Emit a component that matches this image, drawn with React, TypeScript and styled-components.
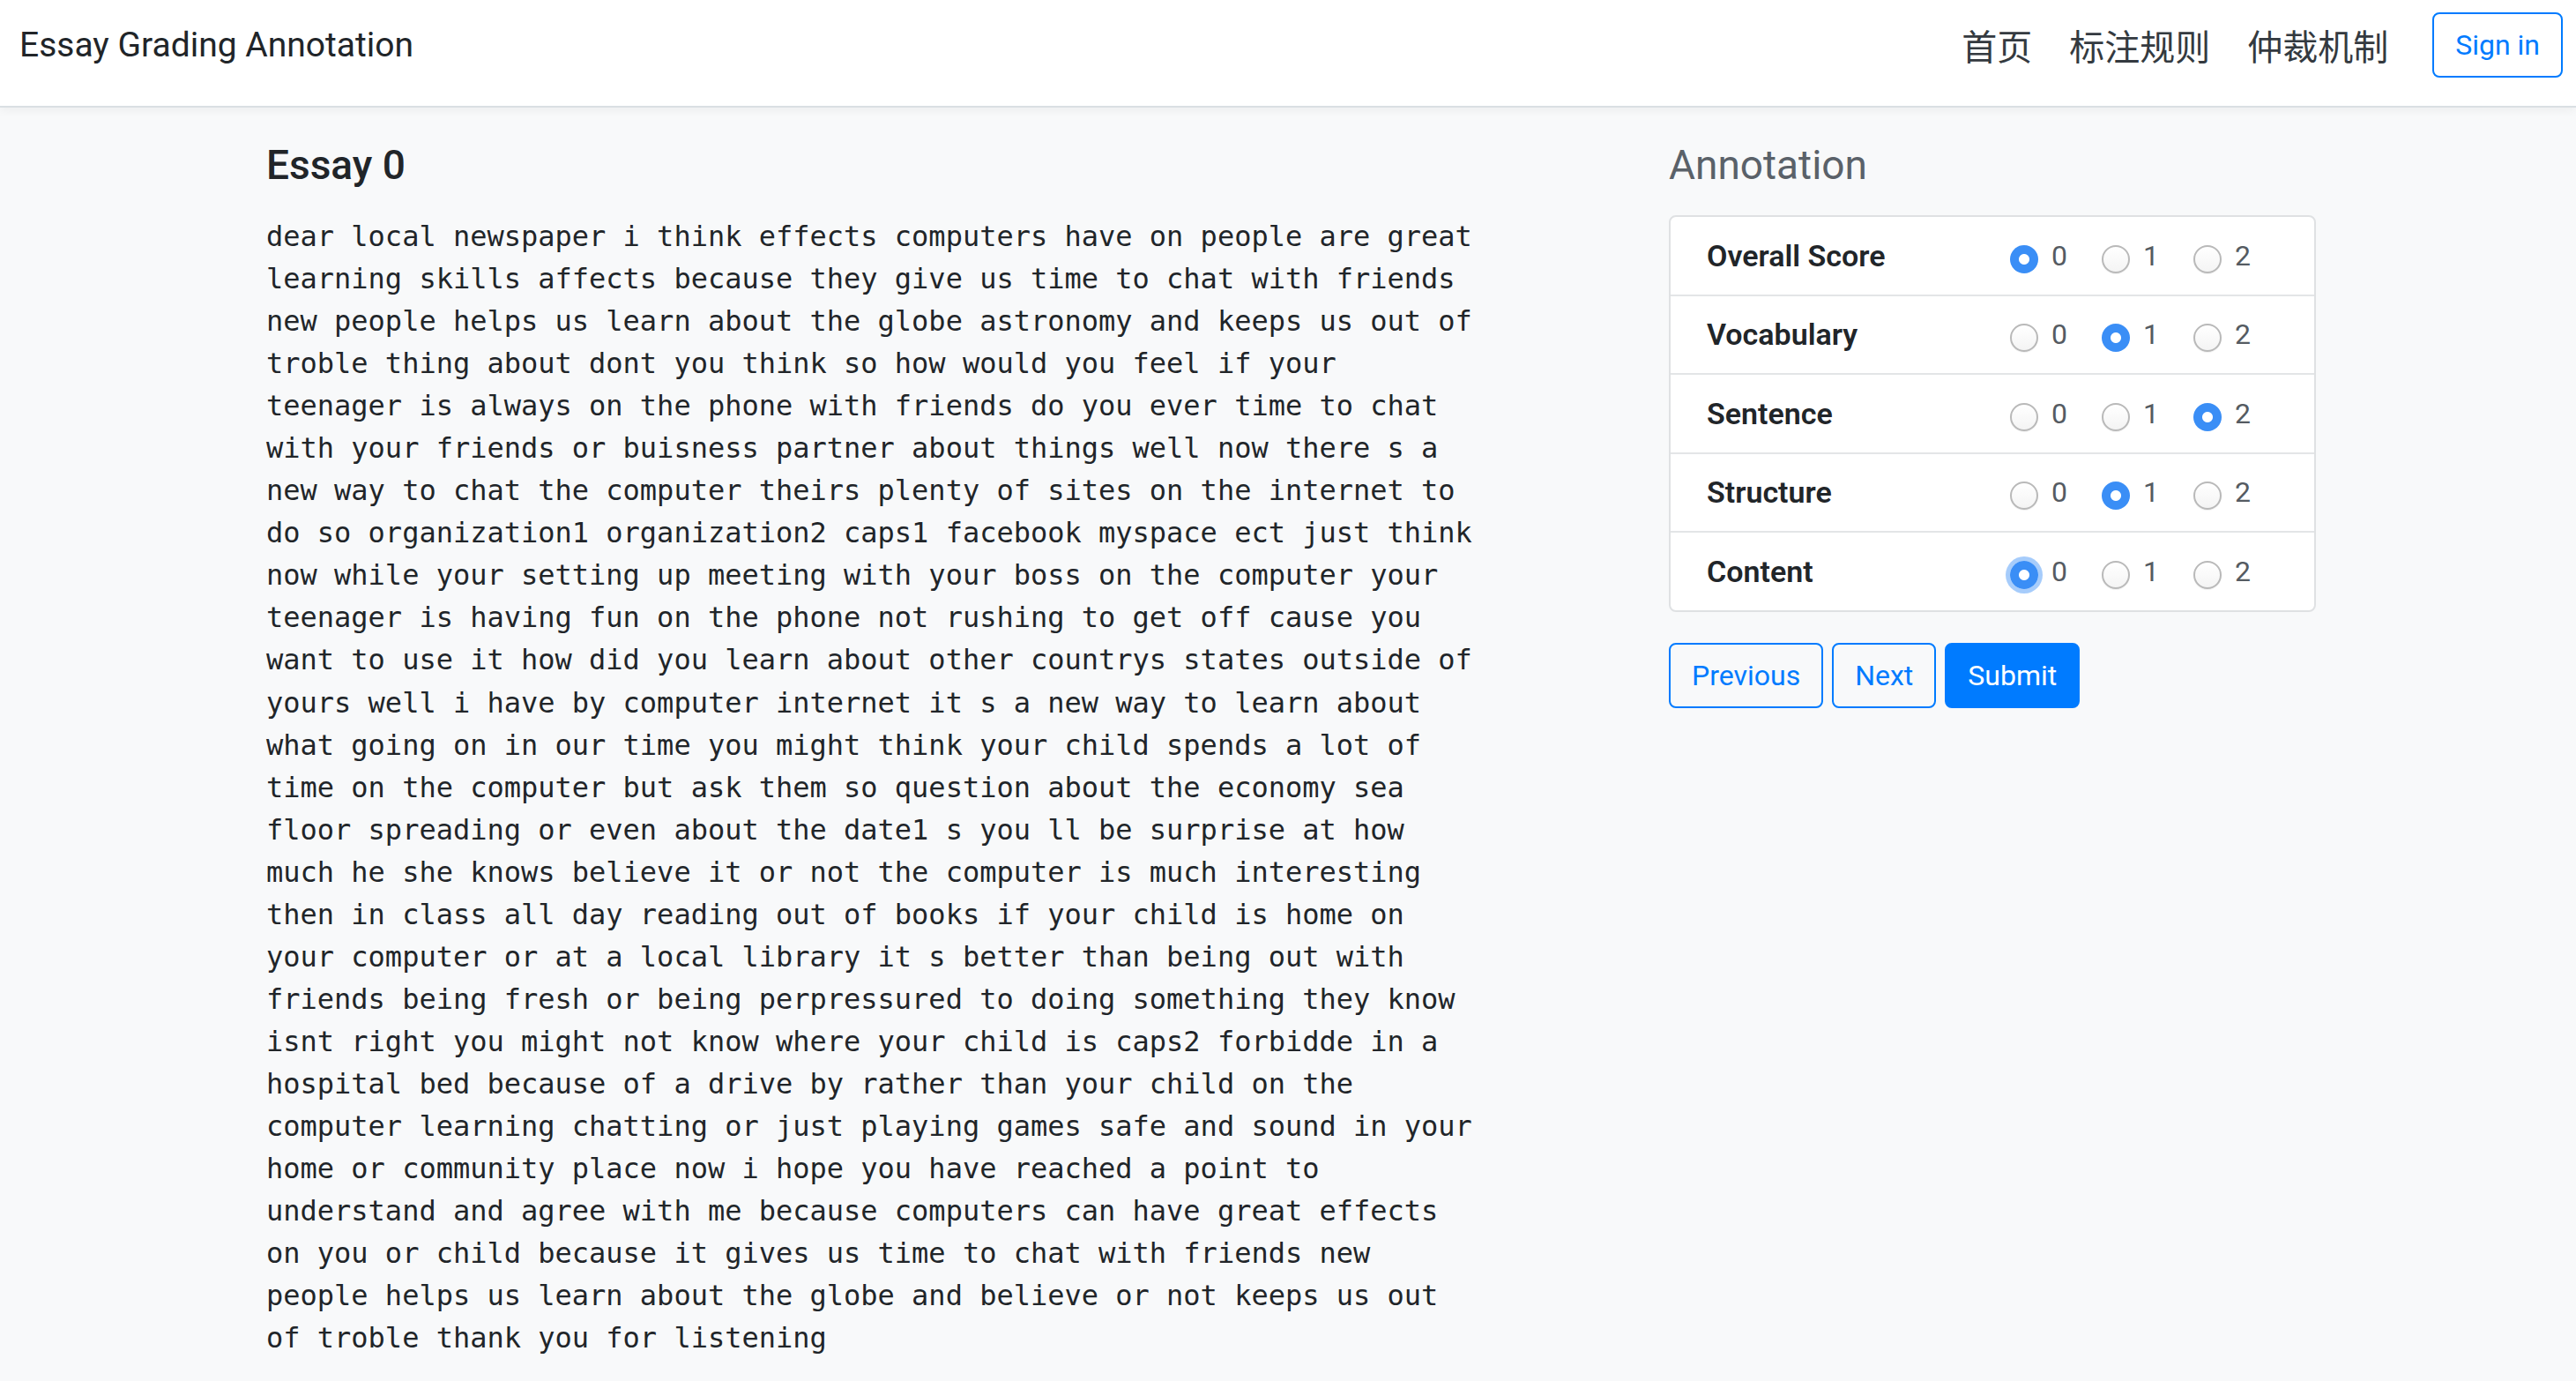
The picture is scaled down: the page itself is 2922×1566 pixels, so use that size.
import React from "react";
import styled, { createGlobalStyle } from "styled-components";

const GlobalStyle = createGlobalStyle`
  html, body {
    margin: 0;
    padding: 0;
    background: #f8f9fa;
    font-family: Roboto, "Liberation Sans", "Noto Sans CJK SC", sans-serif;
    color: #212529;
  }
  * { box-sizing: border-box; }
`;

const NavBar = styled.header`
  height: 122px;
  display: flex;
  align-items: center;
  padding: 0 15px 18px 22px;
  background: #ffffff;
  border-bottom: 2px solid #dadfe3;
  box-shadow: 0 3px 10px rgba(0, 0, 0, 0.05);
`;

const Brand = styled.div`
  font-size: 39px;
  line-height: 48px;
  color: #212529;
  flex: 1;
`;

const NavLinks = styled.nav`
  display: flex;
  align-items: center;
  gap: 42px;
  margin-right: 50px;
`;

const NavLink = styled.a`
  font-family: "Noto Sans CJK SC", sans-serif;
  font-size: 40px;
  line-height: 48px;
  color: #343a40;
  text-decoration: none;
`;

const OutlineButton = styled.button<{ $solid?: boolean }>`
  font-family: Roboto, "Liberation Sans", sans-serif;
  font-size: 32px;
  line-height: 48px;
  padding: 11px 24px;
  border-radius: 8px;
  border: 2px solid #007bff;
  background: ${(p) => (p.$solid ? "#007bff" : "transparent")};
  color: ${(p) => (p.$solid ? "#ffffff" : "#007bff")};
  cursor: pointer;
`;

const Main = styled.main`
  display: grid;
  grid-template-columns: 1fr 734px;
  padding: 38px 295px 0 302px;
`;

const Column = styled.section`
  display: flex;
  flex-direction: column;
  align-items: flex-start;
`;

const Heading = styled.h2<{ $muted?: boolean }>`
  margin: 0;
  font-size: 46px;
  line-height: 55px;
  font-weight: ${(p) => (p.$muted ? 400 : 500)};
  color: ${(p) => (p.$muted ? "#5a6169" : "#212529")};
`;

const EssayText = styled.p`
  margin: 29px 0 0 0;
  width: 71.5ch;
  font-family: "DejaVu Sans Mono", monospace;
  font-size: 32px;
  line-height: 48.05px;
  color: #212529;
`;

const Card = styled.div`
  margin-top: 29px;
  width: 100%;
  background: #ffffff;
  border: 2px solid #dfe1e3;
  border-radius: 8px;
  overflow: hidden;
`;

const Row = styled.div`
  box-sizing: content-box;
  display: grid;
  grid-template-columns: 344px 1fr;
  align-items: center;
  height: 87.5px;
  padding: 0 40px 0 41px;
  & + & {
    border-top: 2px solid #e3e5e7;
  }
`;

const Label = styled.span`
  font-size: 34px;
  font-weight: 600;
  color: #212529;
`;

const Options = styled.div`
  display: flex;
  align-items: center;
  gap: 39px;
`;

const Option = styled.label`
  display: flex;
  align-items: center;
  gap: 15px;
  font-size: 32px;
  color: #555b62;
`;

const Radio = styled.input<{ $focused?: boolean }>`
  appearance: none;
  -webkit-appearance: none;
  margin: 8px 0 0 0;
  width: 32px;
  height: 32px;
  border-radius: 50%;
  border: 2px solid #b9b9b9;
  background: linear-gradient(#ffffff, #f4f4f4);
  box-shadow: 0 1px 1px rgba(0, 0, 0, 0.06);
  outline: none;
  &:checked {
    border: none;
    background: radial-gradient(circle, #ffffff 0 5.5px, #3a8ef6 6.5px);
    box-shadow: ${(p) => (p.$focused ? "0 0 0 5px rgba(58, 142, 246, 0.45)" : "none")};
  }
`;

const ButtonRow = styled.div`
  display: flex;
  gap: 10px;
  margin-top: 35px;
`;

const essay =
  "dear local newspaper i think effects computers have on people are great learning skills affects because they give us time to chat with friends new people helps us learn about the globe astronomy and keeps us out of troble thing about dont you think so how would you feel if your teenager is always on the phone with friends do you ever time to chat with your friends or buisness partner about things well now there s a new way to chat the computer theirs plenty of sites on the internet to do so organization1 organization2 caps1 facebook myspace ect just think now while your setting up meeting with your boss on the computer your teenager is having fun on the phone not rushing to get off cause you want to use it how did you learn about other countrys states outside of yours well i have by computer internet it s a new way to learn about what going on in our time you might think your child spends a lot of time on the computer but ask them so question about the economy sea floor spreading or even about the date1 s you ll be surprise at how much he she knows believe it or not the computer is much interesting then in class all day reading out of books if your child is home on your computer or at a local library it s better than being out with friends being fresh or being perpressured to doing something they know isnt right you might not know where your child is caps2 forbidde in a hospital bed because of a drive by rather than your child on the computer learning chatting or just playing games safe and sound in your home or community place now i hope you have reached a point to understand and agree with me because computers can have great effects on you or child because it gives us time to chat with friends new people helps us learn about the globe and believe or not keeps us out of troble thank you for listening";

const criteria = [
  { name: "Overall Score", value: 0 },
  { name: "Vocabulary", value: 1 },
  { name: "Sentence", value: 2 },
  { name: "Structure", value: 1 },
  { name: "Content", value: 0, focused: true },
];

export default function App() {
  return (
    <>
      <GlobalStyle />
      <NavBar>
        <Brand>Essay Grading Annotation</Brand>
        <NavLinks>
          <NavLink href="#">首页</NavLink>
          <NavLink href="#">标注规则</NavLink>
          <NavLink href="#">仲裁机制</NavLink>
        </NavLinks>
        <OutlineButton>Sign in</OutlineButton>
      </NavBar>
      <Main>
        <Column>
          <Heading>Essay 0</Heading>
          <EssayText>{essay}</EssayText>
        </Column>
        <Column>
          <Heading $muted>Annotation</Heading>
          <Card>
            {criteria.map((c) => (
              <Row key={c.name}>
                <Label>{c.name}</Label>
                <Options>
                  {[0, 1, 2].map((v) => (
                    <Option key={v}>
                      <Radio
                        type="radio"
                        name={c.name}
                        defaultChecked={c.value === v}
                        $focused={c.focused}
                      />
                      {v}
                    </Option>
                  ))}
                </Options>
              </Row>
            ))}
          </Card>
          <ButtonRow>
            <OutlineButton>Previous</OutlineButton>
            <OutlineButton>Next</OutlineButton>
            <OutlineButton $solid>Submit</OutlineButton>
          </ButtonRow>
        </Column>
      </Main>
    </>
  );
}
